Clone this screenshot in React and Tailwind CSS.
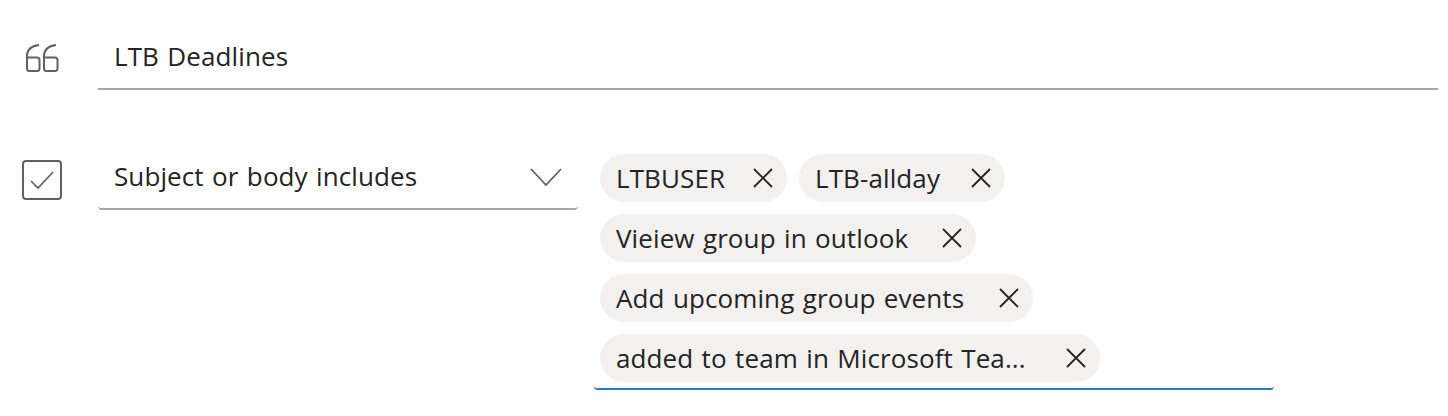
import React from 'react'

const FONT = 'font-["Open_Sans","Noto_Sans",sans-serif]'
const TEXT = 'whitespace-nowrap text-[26px] tracking-[0.1px] [word-spacing:1.5px] text-[#242424]'

const TAGS = [
  ['LTBUSER', 'LTB-allday'],
  ['Vieiew group in outlook'],
  ['Add upcoming group events'],
  ['added to team in Microsoft Tea...'],
]

const TAG_WIDTHS = {
  LTBUSER: 'w-[187px]',
  'LTB-allday': 'w-[206px]',
  'Vieiew group in outlook': 'w-[376px]',
  'Add upcoming group events': 'w-[433px]',
  'added to team in Microsoft Tea...': 'w-[500px]',
}

function CloseIcon() {
  return (
    <svg width="20" height="20" viewBox="0 0 20 20" fill="none" stroke="#242424" strokeWidth="1.8" className="shrink-0">
      <path d="M1 1L19 19M19 1L1 19" />
    </svg>
  )
}

function Tag({ text }) {
  return (
    <div className={`flex h-12 items-center justify-between rounded-3xl bg-[#f2f1f0] pl-[16px] pr-[14px] ${TAG_WIDTHS[text]}`}>
      <span className={`${TEXT} leading-none`}>{text}</span>
      <CloseIcon />
    </div>
  )
}

export default function App() {
  return (
    <div className={`h-[416px] w-[1448px] overflow-hidden bg-white pl-[22px] pr-[10px] pt-[26px] ${FONT}`}>
      <div className="flex items-start">
        <div className="flex h-[62px] w-[76px] shrink-0 items-center">
          <svg width="36" height="30" viewBox="0 0 36 30" fill="none" stroke="#616161" strokeWidth="2" className="ml-[2px]">
            <path d="M15 3C7 4 3 8 3 14V26.500C3 28 4 29 5.500 29H13C14.500 29 15.500 28 15.500 26.500V18C15.500 16.500 14.500 15.500 13 15.500H3" />
            <path d="M32 3C24 4 20 8 20 14V26.500C20 28 21 29 22.500 29H31C32.500 29 33.500 28 33.500 26.500V18C33.500 16.500 32.500 15.500 31 15.500H20" />
          </svg>
        </div>
        <div className="flex h-[64px] flex-1 items-center border-b-2 border-[#a8a7a6] pb-[1px] pl-[16px]">
          <span className={TEXT}>LTB Deadlines</span>
        </div>
      </div>

      <div className="mt-[56px] flex items-start">
        <div className="flex h-[62px] w-[76px] shrink-0 items-center pt-[5px]">
          <div className="flex h-10 w-10 items-center justify-center rounded-[4px] border-2 border-[#616161]">
            <svg width="24" height="20" viewBox="0 0 24 20" fill="none" stroke="#616161" strokeWidth="1.6">
              <path d="M1 11L8 18L23 2" />
            </svg>
          </div>
        </div>
        <div className="flex h-[64px] w-[480px] shrink-0 items-center justify-between rounded-[4px] border-b-2 border-[#a8a7a6] pl-[16px] pr-[16px]">
          <span className={`${TEXT} pb-[2px]`}>Subject or body includes</span>
          <svg width="32" height="18" viewBox="0 0 32 18" fill="none" stroke="#616161" strokeWidth="1.8">
            <path d="M1 1L16 17L31 1" />
          </svg>
        </div>
        <div className="ml-4 mt-[2px] flex h-[242px] w-[680px] shrink-0 flex-col gap-3 rounded-[4px] border-b-2 border-[#2b78c5] pl-[6px] pt-[6px]">
          {TAGS.map((row) => (
            <div key={row[0]} className="flex gap-3">
              {row.map((t) => (
                <Tag key={t} text={t} />
              ))}
            </div>
          ))}
        </div>
      </div>
    </div>
  )
}
